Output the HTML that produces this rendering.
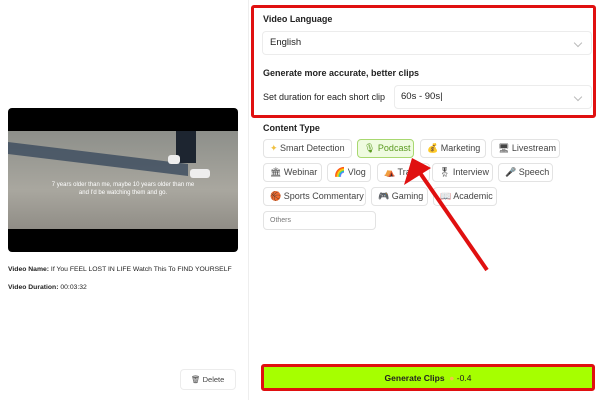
<!DOCTYPE html>
<html><head><meta charset="utf-8"><style>
*{margin:0;padding:0;box-sizing:border-box}
body{width:604px;height:400px;background:#fff;font-family:"Liberation Sans","Noto Sans CJK SC",sans-serif;position:relative;overflow:hidden;color:#222}
.a{position:absolute}
.div{left:248px;top:0;width:1px;height:400px;background:#eee}
.red{border:3px solid #e01010;border-radius:3px}
.box{background:#fff;border:1px solid #ececec;border-radius:4px}
.lbl{font-size:9px;font-weight:bold;color:#222}
.chip{position:absolute;height:19px;border:1px solid #e3e3e3;border-radius:4px;font-size:9px;color:#444;line-height:17px;padding-left:6px;white-space:nowrap}
.chev{position:absolute;right:10px;top:8px;width:6px;height:6px;border-right:1px solid #bbb;border-bottom:1px solid #bbb;transform:rotate(45deg)}
</style></head><body>
<div class="a div"></div>
<div class="a red" style="left:251px;top:5px;width:345px;height:113px"></div>
<div class="a lbl" style="left:263px;top:14px">Video Language</div>
<div class="a box" style="left:262px;top:31px;width:330px;height:24px;font-size:9.5px;line-height:22px;padding-left:7px">English<span class="chev"></span></div>
<div class="a lbl" style="left:263px;top:68px">Generate more accurate, better clips</div>
<div class="a" style="left:263px;top:92px;font-size:9px">Set duration for each short clip</div>
<div class="a box" style="left:394px;top:85px;width:198px;height:24px;font-size:9.5px;line-height:22px;padding-left:6px">60s - 90s|<span class="chev"></span></div>
<div class="a lbl" style="left:263px;top:123px">Content Type</div>
<div class="chip" style="left:263px;top:139px;width:89px"><span style="color:#f0c040">✦</span> Smart Detection</div>
<div class="chip" style="left:357px;top:139px;width:57px;background:#effbe0;border-color:#a8d870;color:#5a9a20">🎙 Podcast</div>
<div class="chip" style="left:420px;top:139px;width:66px">💰 Marketing</div>
<div class="chip" style="left:491px;top:139px;width:69px">🖥 Livestream</div>
<div class="chip" style="left:263px;top:163px;width:59px">🏛 Webinar</div>
<div class="chip" style="left:327px;top:163px;width:44px">🌈 Vlog</div>
<div class="chip" style="left:377px;top:163px;width:53px">⛺ Travel</div>
<div class="chip" style="left:432px;top:163px;width:61px">🎖 Interview</div>
<div class="chip" style="left:498px;top:163px;width:55px">🎤 Speech</div>
<div class="chip" style="left:263px;top:187px;width:103px">🏀 Sports Commentary</div>
<div class="chip" style="left:371px;top:187px;width:57px">🎮 Gaming</div>
<div class="chip" style="left:433px;top:187px;width:64px">📖 Academic</div>
<div class="chip" style="left:263px;top:211px;width:113px;font-size:7px;color:#777">Others</div>
<div class="a" style="left:8px;top:108px;width:230px;height:144px;background:#000;border-radius:4px;overflow:hidden">
 <div class="a" style="left:0;top:23px;width:230px;height:98px;background:linear-gradient(180deg,#8d8f8a,#a9a79f 60%,#908d86)">
  <div class="a" style="left:0;top:22px;width:180px;height:12px;background:#3f4f60;transform:skewY(7deg);opacity:.85"></div>
  <div class="a" style="left:168px;top:0;width:20px;height:32px;background:#1d2530"></div>
  <div class="a" style="left:160px;top:24px;width:12px;height:9px;background:#eee;border-radius:3px"></div>
  <div class="a" style="left:182px;top:38px;width:20px;height:9px;background:#eee;border-radius:3px"></div>
  <div class="a" style="left:0;top:50px;width:230px;text-align:center;color:#fff;font-size:6px;line-height:8px">7 years older than me, maybe 10 years older than me<br>and I'd be watching them and go.</div>
 </div>
</div>
<div class="a" style="left:8px;top:266px;font-size:6.8px;white-space:nowrap"><b>Video Name:</b> If You FEEL LOST IN LIFE Watch This To FIND YOURSELF</div>
<div class="a" style="left:8px;top:284px;font-size:6.8px"><b>Video Duration:</b> 00:03:32</div>
<div class="a box" style="left:180px;top:369px;width:56px;height:21px;font-size:7.5px;line-height:19px;padding-left:10px;color:#444">🗑 Delete</div>
<div class="a red" style="left:261px;top:364px;width:334px;height:27px;background:#a6ff00"></div>
<div class="a" style="left:261px;top:373px;width:334px;text-align:center;font-size:8.5px"><b>Generate Clips</b> &nbsp;<span style="color:#f3c24a">●</span> -0.4</div>
<svg class="a" style="left:0;top:0" width="604" height="400"><line x1="487" y1="270" x2="418" y2="170" stroke="#e01010" stroke-width="4"/><polygon points="412,158 404,185 431,168" fill="#e01010"/></svg>
</body></html>
